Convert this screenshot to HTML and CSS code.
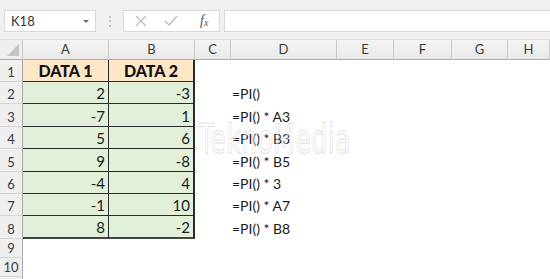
FILE: index.html
```html
<!DOCTYPE html>
<html lang="en">
<head>
  <meta charset="UTF-8" />
  <title>PI Formula</title>
  <link rel="stylesheet" href="styles.css">
</head>
<body>

  <div class="toolbar">
    <div class="name-box">
      <span>K18</span>
      <span class="arrow"></span>
    </div>
    <div class="grip">&#8942;</div>
    <div class="buttons">
      <svg width="12" height="12" viewBox="0 0 12 12"><path d="M1 1 L11 11 M11 1 L1 11" stroke="#bdbdbd" stroke-width="1.4" fill="none"/></svg>
      <svg width="14" height="12" viewBox="0 0 14 12"><path d="M1 6 L5 10 L13 1" stroke="#bdbdbd" stroke-width="1.4" fill="none"/></svg>
      <span class="fx">f<sub>x</sub></span>
    </div>
    <div class="formula"></div>
  </div>

  <div class="sheet">
    <div class="corner"><span class="tri"></span></div>
    <div class="col-head">A</div>
    <div class="col-head">B</div>
    <div class="col-head">C</div>
    <div class="col-head">D</div>
    <div class="col-head">E</div>
    <div class="col-head">F</div>
    <div class="col-head">G</div>
    <div class="col-head">H</div>

    <div class="row-head">1</div>
    <div class="cell title">DATA 1</div>
    <div class="cell title right-edge">DATA 2</div>
    <div></div><div></div><div></div><div></div><div></div><div></div>

    <div class="row-head">2</div>
    <div class="cell num">2</div>
    <div class="cell num right-edge">-3</div>
    <div></div><div class="formula-text">=PI()</div><div></div><div></div><div></div><div></div>

    <div class="row-head">3</div>
    <div class="cell num">-7</div>
    <div class="cell num right-edge">1</div>
    <div></div><div class="formula-text">=PI() * A3</div><div></div><div></div><div></div><div></div>

    <div class="row-head">4</div>
    <div class="cell num">5</div>
    <div class="cell num right-edge">6</div>
    <div></div><div class="formula-text">=PI() * B3</div><div></div><div></div><div></div><div></div>

    <div class="row-head">5</div>
    <div class="cell num">9</div>
    <div class="cell num right-edge">-8</div>
    <div></div><div class="formula-text">=PI() * B5</div><div></div><div></div><div></div><div></div>

    <div class="row-head">6</div>
    <div class="cell num">-4</div>
    <div class="cell num right-edge">4</div>
    <div></div><div class="formula-text">=PI() * 3</div><div></div><div></div><div></div><div></div>

    <div class="row-head">7</div>
    <div class="cell num">-1</div>
    <div class="cell num right-edge">10</div>
    <div></div><div class="formula-text">=PI() * A7</div><div></div><div></div><div></div><div></div>

    <div class="row-head">8</div>
    <div class="cell num last">8</div>
    <div class="cell num last right-edge">-2</div>
    <div></div><div class="formula-text">=PI() * B8</div><div></div><div></div><div></div><div></div>

    <div class="row-head">9</div>
    <div></div><div></div><div></div><div></div><div></div><div></div><div></div><div></div>

    <div class="row-head">10</div>
    <div></div><div></div><div></div><div></div><div></div><div></div><div></div><div></div>

    <div class="row-head"></div>
    <div></div><div></div><div></div><div></div><div></div><div></div><div></div><div></div>

    <div class="watermark">TeknoMedia</div>
  </div>

</body>
</html>
```

FILE: styles.css
```css
* {
  box-sizing: border-box;
  margin: 0;
  padding: 0;
}

body {
  width: 550px;
  height: 279px;
  overflow: hidden;
  background: #fff;
  font-family: Lato, 'Noto Sans', sans-serif;
  color: #222;
}

/* Formula bar */
.toolbar {
  height: 40px;
  background: #f1f1f1;
  display: flex;
  align-items: flex-start;
  padding: 10px 0 0 4px;
  border-bottom: 1px solid #dcdcdc;
}

.name-box {
  width: 92px;
  height: 22px;
  background: #fff;
  border: 1px solid #d8d8d8;
  display: flex;
  align-items: center;
  justify-content: space-between;
  padding: 0 6px 0 6px;
  font-size: 13px;
  color: #333;
}

.arrow {
  width: 0;
  height: 0;
  border-left: 3px solid transparent;
  border-right: 3px solid transparent;
  border-top: 3px solid #666;
}

.grip {
  width: 27px;
  text-align: center;
  color: #b0b0b0;
  font-size: 12px;
  line-height: 22px;
}

.buttons {
  width: 97px;
  height: 22px;
  background: #fff;
  border: 1px solid #d8d8d8;
  display: flex;
  align-items: center;
  padding-left: 11px;
  gap: 17px;
}

.fx {
  font-family: 'Liberation Serif', serif;
  font-style: italic;
  font-size: 14px;
  color: #555;
  margin-left: 5px;
}

.fx sub {
  font-size: 10px;
  vertical-align: -1px;
}

.formula {
  flex: 1;
  height: 22px;
  margin-left: 4px;
  background: #fff;
  border: 1px solid #d8d8d8;
  border-right: none;
}

/* Sheet */
.sheet {
  position: relative;
  display: grid;
  grid-template-columns: 23px 86px 86px 36px 106px 57px 58px 56px 42px;
  grid-template-rows: 20px 22px 22px 23px 22px 23px 22px 22px 23px 19px 19px 19px;
}

.corner {
  background: #efefef;
  border-right: 1px solid #c8c8c8;
  border-bottom: 1px solid #ababab;
  position: relative;
}

.tri {
  position: absolute;
  right: 3px;
  bottom: 3px;
  width: 0;
  height: 0;
  border-left: 12px solid transparent;
  border-bottom: 12px solid #c4c4c4;
}

.col-head {
  background: linear-gradient(#f4f4f4, #e9e9e9);
  border-right: 1px solid #c8c8c8;
  border-bottom: 1px solid #ababab;
  text-align: center;
  font-size: 13px;
  line-height: 19px;
  color: #3a3a3a;
}

.row-head {
  background: #efefef;
  border-right: 1px solid #ababab;
  border-bottom: 1px solid #d4d4d4;
  text-align: center;
  font-size: 13px;
  color: #3a3a3a;
  display: flex;
  align-items: flex-end;
  justify-content: center;
  padding-bottom: 1px;
}

.cell {
  border-bottom: 1px solid #2b2b2b;
  font-size: 15px;
  display: flex;
  align-items: flex-end;
  padding-bottom: 1px;
}

.title {
  background: #fde7c6;
  font-weight: 900;
  font-size: 16px;
  justify-content: center;
  color: #111;
}

.num {
  background: #e2efd9;
  justify-content: flex-end;
  padding-right: 3px;
  color: #1a1a1a;
}

.cell:not(.right-edge) {
  border-right: 1px solid #2b2b2b;
}

.right-edge {
  border-right: 2px solid #2b2b2b;
}

.last {
  border-bottom: 2px solid #444;
}

.formula-text {
  font-size: 14px;
  padding-left: 1px;
  display: flex;
  align-items: flex-end;
  padding-bottom: 2px;
  white-space: nowrap;
  color: #1a1a1a;
}

.watermark {
  position: absolute;
  left: 199px;
  top: 76px;
  font-family: 'DejaVu Sans', sans-serif;
  font-size: 40px;
  transform: scaleX(0.62);
  transform-origin: left top;
  color: rgba(255, 255, 255, 0.5);
  -webkit-text-stroke: 1px rgba(160, 160, 160, 0.35);
  letter-spacing: 1px;
  pointer-events: none;
}
```
